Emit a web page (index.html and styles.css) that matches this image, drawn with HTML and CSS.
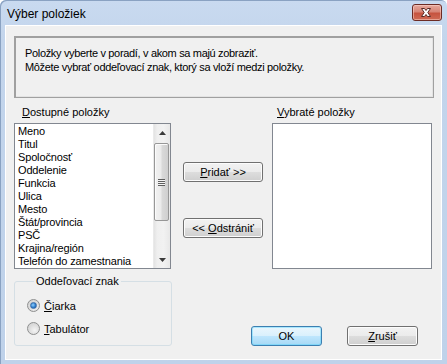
FILE: index.html
```html
<!DOCTYPE html>
<html>
<head>
<meta charset="utf-8">
<link rel="stylesheet" href="styles.css">
</head>
<body>
<div class="window">
  <div class="titlebar">
    <span class="title">Výber položiek</span>
    <div class="close">
      <svg width="30" height="17" viewBox="0 0 30 17">
        <path d="M10.5 4.5 L13.5 4.5 L15 6.5 L16.5 4.5 L19.5 4.5 L16.8 8.5 L19.5 12.5 L16.5 12.5 L15 10.5 L13.5 12.5 L10.5 12.5 L13.2 8.5 Z" fill="#ffffff" stroke="#5a2a26" stroke-width="1" stroke-linejoin="round"/>
      </svg>
    </div>
  </div>
  <div class="client">
    <div class="info">
      <p>Položky vyberte v poradí, v akom sa majú zobraziť.</p>
      <p>Môžete vybrať oddeľovací znak, ktorý sa vloží medzi položky.</p>
    </div>
    <div class="lists">
      <div class="col">
        <div class="label label-left"><u>D</u>ostupné položky</div>
        <div class="listbox">
          <ul class="items">
            <li>Meno</li>
            <li>Titul</li>
            <li>Spoločnosť</li>
            <li>Oddelenie</li>
            <li>Funkcia</li>
            <li>Ulica</li>
            <li>Mesto</li>
            <li>Štát/provincia</li>
            <li>PSČ</li>
            <li>Krajina/región</li>
            <li>Telefón do zamestnania</li>
          </ul>
          <div class="scrollbar">
            <div class="arrow"><svg width="7" height="4" viewBox="0 0 7 4"><path d="M0 4 L3.5 0 L7 4 Z" fill="#3a3a3a"/></svg></div>
            <div class="track">
              <div class="thumb"><span class="grip"></span></div>
            </div>
            <div class="arrow"><svg width="7" height="4" viewBox="0 0 7 4"><path d="M0 0 L3.5 4 L7 0 Z" fill="#3a3a3a"/></svg></div>
          </div>
        </div>
      </div>
      <div class="mid">
        <button class="btn btn-add"><u>P</u>ridať &gt;&gt;</button>
        <button class="btn btn-remove">&lt;&lt; <u>O</u>dstrániť</button>
      </div>
      <div class="col">
        <div class="label label-right"><u>V</u>ybraté položky</div>
        <div class="listbox"></div>
      </div>
    </div>
    <div class="bottom">
      <fieldset class="group">
        <legend>Oddeľovací znak</legend>
        <label class="radio"><span class="dot checked"></span><span><u>Č</u>iarka</span></label>
        <label class="radio"><span class="dot"></span><span><u>T</u>abulátor</span></label>
      </fieldset>
      <div class="actions">
        <button class="btn btn-ok">OK</button>
        <button class="btn btn-cancel"><u>Z</u>rušiť</button>
      </div>
    </div>
  </div>
</div>
</body>
</html>
```

FILE: styles.css
```css
html, body {
  margin: 0;
  padding: 0;
  background: #ffffff;
}

.window {
  width: 447px;
  height: 364px;
  box-sizing: border-box;
  background: linear-gradient(to bottom, #c9daf0 0px, #c3d5ec 40px, #bfd2ea 100%);
  padding: 0 5px 4px 5px;
  display: flex;
  flex-direction: column;
  font: 11px "Liberation Sans", Arial, sans-serif;
  color: #000;
  border-radius: 6px 6px 0 0;
  box-shadow: inset 1px 1px 0 #8aa2c2;
}

.titlebar {
  height: 25px;
  display: flex;
  align-items: flex-start;
  justify-content: space-between;
  flex: none;
}

.title {
  font-size: 12px;
  margin: 7px 0 0 2px;
  line-height: 14px;
}

.close {
  width: 30px;
  height: 17px;
  margin: 4px 0 0 0;
  box-sizing: border-box;
  border: 1px solid #6c2b24;
  border-radius: 3px;
  background: linear-gradient(to bottom, #e6a89d 0%, #d78576 45%, #c6533f 55%, #cf6b55 100%);
  box-shadow: inset 0 0 0 1px rgba(255, 220, 210, 0.5);
  display: flex;
  align-items: center;
  justify-content: center;
}

.close svg {
  display: block;
  margin-top: -1px;
  margin-left: -2px;
}

.client {
  flex: 1;
  background: #f0f0f0;
  padding: 11px 0 0 9px;
  box-shadow: inset 1px 1px 0 #ffffff, inset -1px -1px 0 #ffffff;
}

.info {
  width: 420px;
  height: 62px;
  box-sizing: border-box;
  border: 1px solid #a0a0a0;
  box-shadow: inset 1px 1px 0 #a0a0a0, inset -1px -1px 0 #e3e3e3;
  padding: 9px 0 0 10px;
  letter-spacing: -0.33px;
}

.info p {
  margin: 0;
  line-height: 14px;
}

.lists {
  display: grid;
  grid-template-columns: 157px 80px 157px;
  column-gap: 12px;
  height: 171px;
}

.lists .col:last-child {
  margin-left: -3px;
}

.label {
  height: 25px;
  box-sizing: border-box;
  padding-top: 8px;
  line-height: 13px;
}

.label-left {
  padding-left: 8px;
}

.label-right {
  padding-left: 5px;
}

.listbox {
  height: 146px;
  box-sizing: border-box;
  border: 1px solid #828790;
  background: #ffffff;
  display: flex;
}

.items {
  list-style: none;
  margin: 0;
  padding: 1px 0 0 3px;
  flex: 1;
  overflow: hidden;
  letter-spacing: -0.15px;
}

.items li {
  line-height: 13px;
  height: 13px;
  white-space: nowrap;
}

.scrollbar {
  width: 17px;
  flex: none;
  display: flex;
  flex-direction: column;
  background: linear-gradient(to right, #e3e3e3 0%, #efefef 20%, #f2f2f2 60%, #e8e8e8 100%);
  border-left: 1px solid #eaeaea;
  box-sizing: border-box;
}

.arrow {
  height: 17px;
  display: flex;
  align-items: center;
  justify-content: center;
  flex: none;
}

.arrow svg {
  display: block;
}

.track {
  flex: 1;
  padding: 2px 1px 20px 0;
}

.thumb {
  height: 78px;
  box-sizing: border-box;
  border: 1px solid #979797;
  border-radius: 2px;
  background: linear-gradient(to right, #f2f2f2 0%, #ebebeb 45%, #d9d9d9 55%, #cfcfcf 100%);
  box-shadow: inset 1px 1px 0 #fbfbfb;
  display: flex;
  align-items: center;
  justify-content: center;
}

.grip {
  width: 7px;
  height: 7px;
  background: repeating-linear-gradient(to bottom, #5f5f5f 0px, #5f5f5f 1px, #f4f4f4 1px, #f4f4f4 2px);
}

.mid {
  display: flex;
  flex-direction: column;
  padding-top: 64px;
  gap: 36px;
}

.btn {
  font: 11px "Liberation Sans", Arial, sans-serif;
  color: #000;
  height: 20px;
  box-sizing: border-box;
  border: 1px solid #707070;
  border-radius: 3px;
  background: linear-gradient(to bottom, #f2f2f2 0%, #ebebeb 50%, #dddddd 51%, #cfcfcf 100%);
  box-shadow: inset 0 0 0 1px #fcfcfc;
  padding: 0;
  line-height: 16px;
}

.btn-add,
.btn-remove {
  width: 80px;
}

.bottom {
  display: flex;
  align-items: flex-end;
  height: 78px;
}

.group {
  margin: 0;
  width: 158px;
  height: 71px;
  box-sizing: border-box;
  border: 1px solid #d5dfe5;
  border-radius: 3px;
  padding: 11px 0 0 12px;
  position: relative;
  top: -1px;
}

.group legend {
  padding: 0 2px;
  margin-left: 7px;
  line-height: 13px;
  font-size: 11px;
}

.radio {
  display: flex;
  align-items: center;
  gap: 4px;
  height: 13px;
  margin-bottom: 10px;
}

.dot {
  width: 13px;
  height: 13px;
  box-sizing: border-box;
  border-radius: 50%;
  border: 1px solid #8e8f8f;
  background: radial-gradient(circle at 60% 65%, #f4f4f4 0%, #dcdcdc 55%, #cfcfcf 100%);
  display: flex;
  align-items: center;
  justify-content: center;
}

.dot.checked::after {
  content: "";
  width: 5px;
  height: 5px;
  border-radius: 50%;
  background: radial-gradient(circle at 40% 40%, #8fd0ff 0%, #2a78c8 60%, #1d5390 100%);
  border: 1px solid #3c6ea8;
}

.actions {
  display: flex;
  gap: 25px;
  margin-left: 79px;
  margin-bottom: 1px;
}

.btn-ok,
.btn-cancel {
  width: 71px;
}

.btn-ok {
  border-color: #3c7fb1;
  background: linear-gradient(to bottom, #eaf6fd 0%, #d9f0fc 50%, #bee6fd 51%, #a7d9f5 100%);
  box-shadow: inset 0 0 0 1px #48d2fc66;
}
```
